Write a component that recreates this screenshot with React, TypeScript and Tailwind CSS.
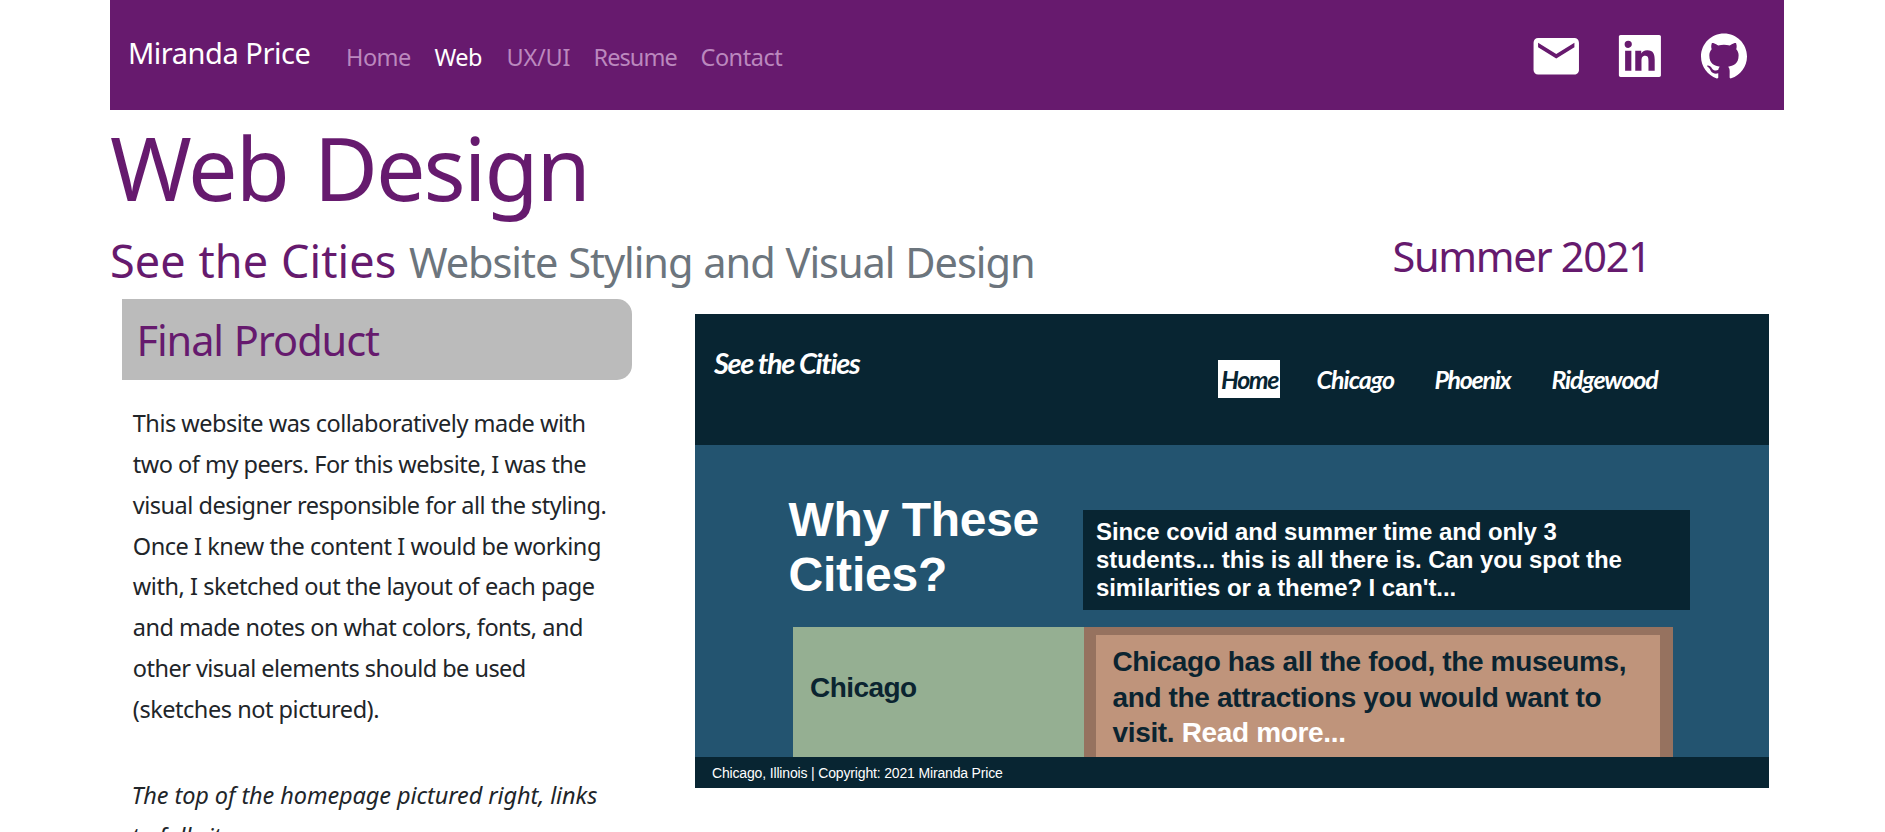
import type { ReactNode } from "react";
import { AiFillLinkedin } from "react-icons/ai";
import { MdEmail } from "react-icons/md";
import { SiGithub } from "react-icons/si";

const navItems = [
  { label: "Home", className: "w-[88.5px] tracking-[-0.53px]" },
  { label: "Web", className: "w-[72px] tracking-[-0.57px] text-white" },
  { label: "UX/UI", className: "w-[87px] tracking-[-0.217px]" },
  { label: "Resume", className: "w-[107px] tracking-[-0.925px]" },
  { label: "Contact", className: "tracking-[-0.473px]" },
];

const description = [
  { text: "This website was collaboratively made with", className: "tracking-[-0.5px]" },
  { text: "two of my peers. For this website, I was the", className: "tracking-[-0.51px]" },
  { text: "visual designer responsible for all the styling.", className: "tracking-[-0.5px]" },
  { text: "Once I knew the content I would be working", className: "tracking-[-0.45px]" },
  { text: "with, I sketched out the layout of each page", className: "tracking-[-0.45px]" },
  { text: "and made notes on what colors, fonts, and", className: "tracking-[-0.51px]" },
  { text: "other visual elements should be used", className: "tracking-[-0.53px]" },
  { text: "(sketches not pictured).", className: "tracking-[-0.467px]" },
];

function Line({ className = "", children }: { className?: string; children: ReactNode }) {
  return <span className={`block whitespace-nowrap ${className}`}>{children}</span>;
}

function Navbar() {
  return (
    <header className="flex h-[110px] items-start bg-[#671a6e] text-white">
      <a className="mt-[33px] ml-[18px] w-[218px] text-[29px] leading-[40px] tracking-[-0.46px] whitespace-nowrap">
        Miranda Price
      </a>
      <nav className="mt-[39px] flex text-[23.5px] leading-[36px] text-[#bb88be]">
        {navItems.map((item) => (
          <a key={item.label} className={`whitespace-nowrap ${item.className}`}>
            {item.label}
          </a>
        ))}
      </nav>
      <div className="mt-[28.5px] mr-[37px] ml-auto flex items-center">
        <MdEmail className="mr-[30px] size-[54.5px]" />
        <AiFillLinkedin className="mr-[34px] size-[53.8px]" />
        <SiGithub className="size-[46px]" />
      </div>
    </header>
  );
}

function CitiesPreview() {
  return (
    <section className="mt-[15px] ml-[63px] flex h-[474px] w-[1074px] flex-col overflow-hidden bg-[#235470] font-['Liberation_Sans',Arial,sans-serif] font-bold text-white">
      <div className="flex h-[130.5px] shrink-0 items-start bg-[#082532] font-['Lato',sans-serif] italic">
        <div className="mt-[29px] ml-[19px] w-[504px] text-[29px] leading-[40px] tracking-[-1.4px] whitespace-nowrap">
          See the Cities
        </div>
        <nav className="mt-[46px] flex text-[25px] leading-[38px] whitespace-nowrap">
          <a className="w-[61.5px] bg-white pl-[3px] tracking-[-1.4px] text-[#082532]">Home</a>
          <a className="ml-[37px] w-[118px] tracking-[-1px]">Chicago</a>
          <a className="w-[117px] tracking-[-1.3px]">Phoenix</a>
          <a className="tracking-[-1.2px]">Ridgewood</a>
        </nav>
      </div>
      <div className="flex h-[182px] shrink-0">
        <h3 className="mt-[47.5px] ml-[93.5px] w-[294.5px] text-[48px] leading-[55px]">
          <Line className="tracking-[-0.336px]">Why These</Line>
          <Line className="tracking-[-0.2px]">Cities?</Line>
        </h3>
        <div className="mt-[65px] h-[100.5px] w-[606.5px] bg-[#082532] pt-[8.5px] pl-[13px] text-[24px] leading-[28px]">
          <Line className="tracking-[-0.09px]">Since covid and summer time and only 3</Line>
          <Line className="tracking-[-0.073px]">students... this is all there is. Can you spot the</Line>
          <Line className="tracking-[-0.088px]">similarities or a theme? I can't...</Line>
        </div>
      </div>
      <div className="ml-[98px] flex h-[130.5px] w-[880px] shrink-0 text-[#0b2430]">
        <div className="w-[290.5px] bg-[#95af92] pt-[41px] pl-[17px] text-[28px] leading-[40px] tracking-[-0.559px]">
          Chicago
        </div>
        <div className="grow bg-[#96725f] pt-[8.5px] pr-[13px] pl-[12px]">
          <div className="h-full bg-[#bf947b] pt-[9px] pl-[17px] text-[28px] leading-[35.5px]">
            <Line className="tracking-[-0.36px]">Chicago has all the food, the museums,</Line>
            <Line className="tracking-[-0.37px]">and the attractions you would want to</Line>
            <Line className="tracking-[-0.343px]">
              visit. <span className="text-white">Read more...</span>
            </Line>
          </div>
        </div>
      </div>
      <div className="grow bg-[#082532] pt-[2px] pl-[17px] text-[14px] leading-[29px] font-normal tracking-[-0.16px]">
        Chicago, Illinois | Copyright: 2021 Miranda Price
      </div>
    </section>
  );
}

export default function App() {
  return (
    <div className="h-[832px] overflow-hidden bg-white font-['Noto_Sans','Open_Sans',sans-serif]">
      <div className="ml-[110px] w-[1674px]">
        <Navbar />
        <h1 className="mt-[3px] text-[88px] leading-[108px] tracking-[-2px] text-[#661a6e] [word-spacing:5px]">
          Web Design
        </h1>
        <div className="flex h-[78px] items-start leading-[54px] text-[#661a6e]">
          <h2 className="mt-[13px] w-[1282.5px] text-[45px] whitespace-nowrap">
            <span className="inline-block w-[299px] tracking-[0.08px] [word-spacing:1px]">See the Cities</span>
            <small className="text-[41.5px] tracking-[-1.05px] text-[#6c757d] [word-spacing:1.2px]">
              Website Styling and Visual Design
            </small>
          </h2>
          <div className="mt-[8px] text-[41.5px] tracking-[-1.3px] whitespace-nowrap">Summer 2021</div>
        </div>
        <div className="flex items-start pl-[12px]">
          <section className="w-[510px] shrink-0">
            <h3 className="rounded-r-[15px] bg-[#bbbbbb] pt-[2px] pl-[14.4px] text-[41.5px] leading-[78.7px] tracking-[-1.05px] text-[#661a6e] [word-spacing:1px]">
              Final Product
            </h3>
            <p className="mt-[23.5px] pl-[10.8px] text-[23.5px] leading-[40.8px] text-[#212529]">
              {description.map((line) => (
                <Line key={line.text} className={line.className}>
                  {line.text}
                </Line>
              ))}
            </p>
            <p className="mt-[45.5px] pl-[9.6px] text-[23.5px] leading-[40.8px] tracking-[-0.09px] text-[#212529] italic">
              <Line>The top of the homepage pictured right, links</Line>
              <Line>to full site.</Line>
            </p>
          </section>
          <CitiesPreview />
        </div>
      </div>
    </div>
  );
}
